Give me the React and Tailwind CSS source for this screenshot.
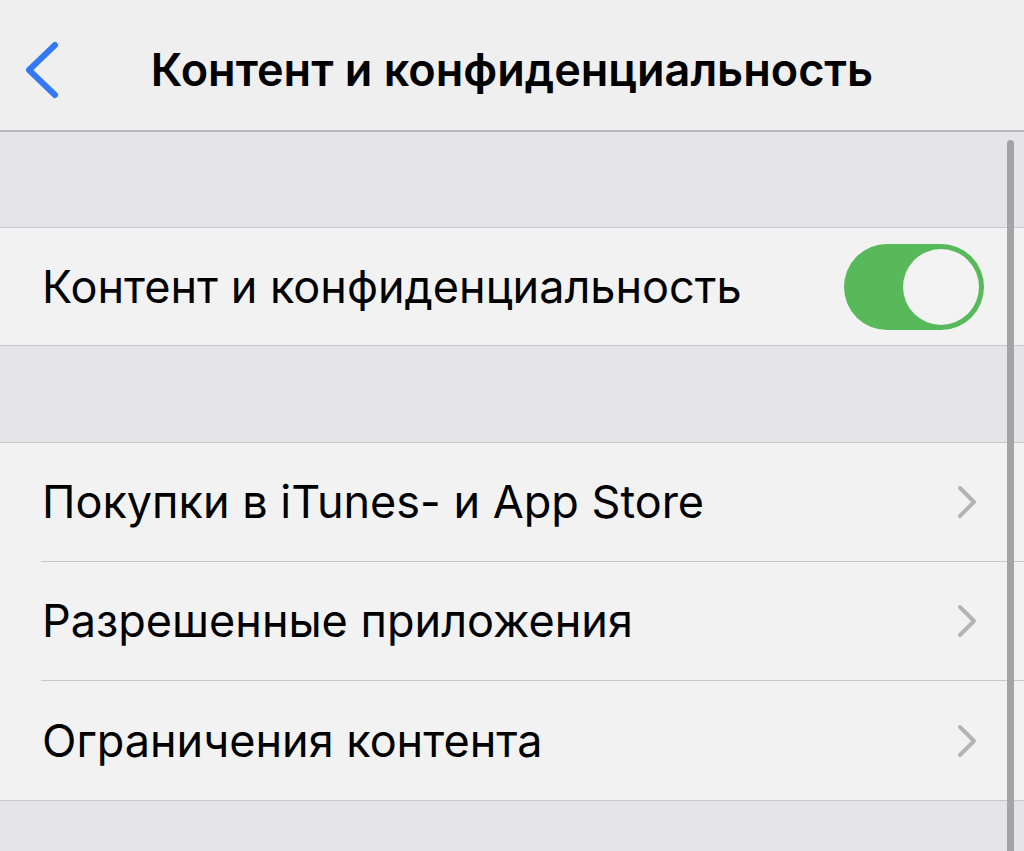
import React from "react";

const ROWS = [
  "Покупки в iTunes- и App Store",
  "Разрешенные приложения",
  "Ограничения контента",
];

function Chevron() {
  return (
    <svg width="22" height="36" viewBox="0 0 22 36" fill="none">
      <path d="M4 4 L18 18 L4 32" stroke="#b4b4b8" strokeWidth="4" strokeLinecap="round" strokeLinejoin="round" />
    </svg>
  );
}

export default function App() {
  return (
    <div
      className="relative w-[1024px] h-[851px] overflow-hidden bg-[#e5e4e9] text-black"
      style={{ fontFamily: "Inter, 'Noto Sans', sans-serif" }}
    >
      <header className="relative h-[132px] bg-[#efeff0] border-b-2 border-[#b6b6b9] flex items-center justify-center pt-[10px]">
        <svg className="absolute left-[22px] top-[40px]" width="40" height="60" viewBox="0 0 40 60" fill="none">
          <path d="M33 5 L7 30 L33 55" stroke="#3478f6" strokeWidth="6" strokeLinecap="round" strokeLinejoin="round" />
        </svg>
        <h1 className="text-[45px] font-semibold">Контент и конфиденциальность</h1>
      </header>

      <div className="h-[95px]" />

      <div className="h-[119px] bg-[#f2f2f2] border-y border-[#c8c7cc] flex items-center justify-between pl-[42px] pr-[40px]">
        <span className="text-[45px]">Контент и конфиденциальность</span>
        <div className="w-[140px] h-[86px] rounded-full bg-[#58b95b] flex items-center justify-end pr-[5px]">
          <div className="w-[76px] h-[76px] rounded-full bg-[#f3f3f3]" />
        </div>
      </div>

      <div className="h-[96px]" />

      <div className="bg-[#f2f2f2] border-y border-[#c8c7cc]">
        {ROWS.map((label, i) => (
          <div key={label} className="pl-[41px]">
            <div
              className={`h-[119px] flex items-center justify-between pr-[46px] ${
                i < ROWS.length - 1 ? "border-b border-[#c8c7cc]" : ""
              }`}
            >
              <span className="pl-px text-[45px]">{label}</span>
              <Chevron />
            </div>
          </div>
        ))}
      </div>

      <div className="absolute left-[1007px] top-[140px] w-[7px] h-[720px] rounded-full bg-[#a4a4a6]" />
    </div>
  );
}
